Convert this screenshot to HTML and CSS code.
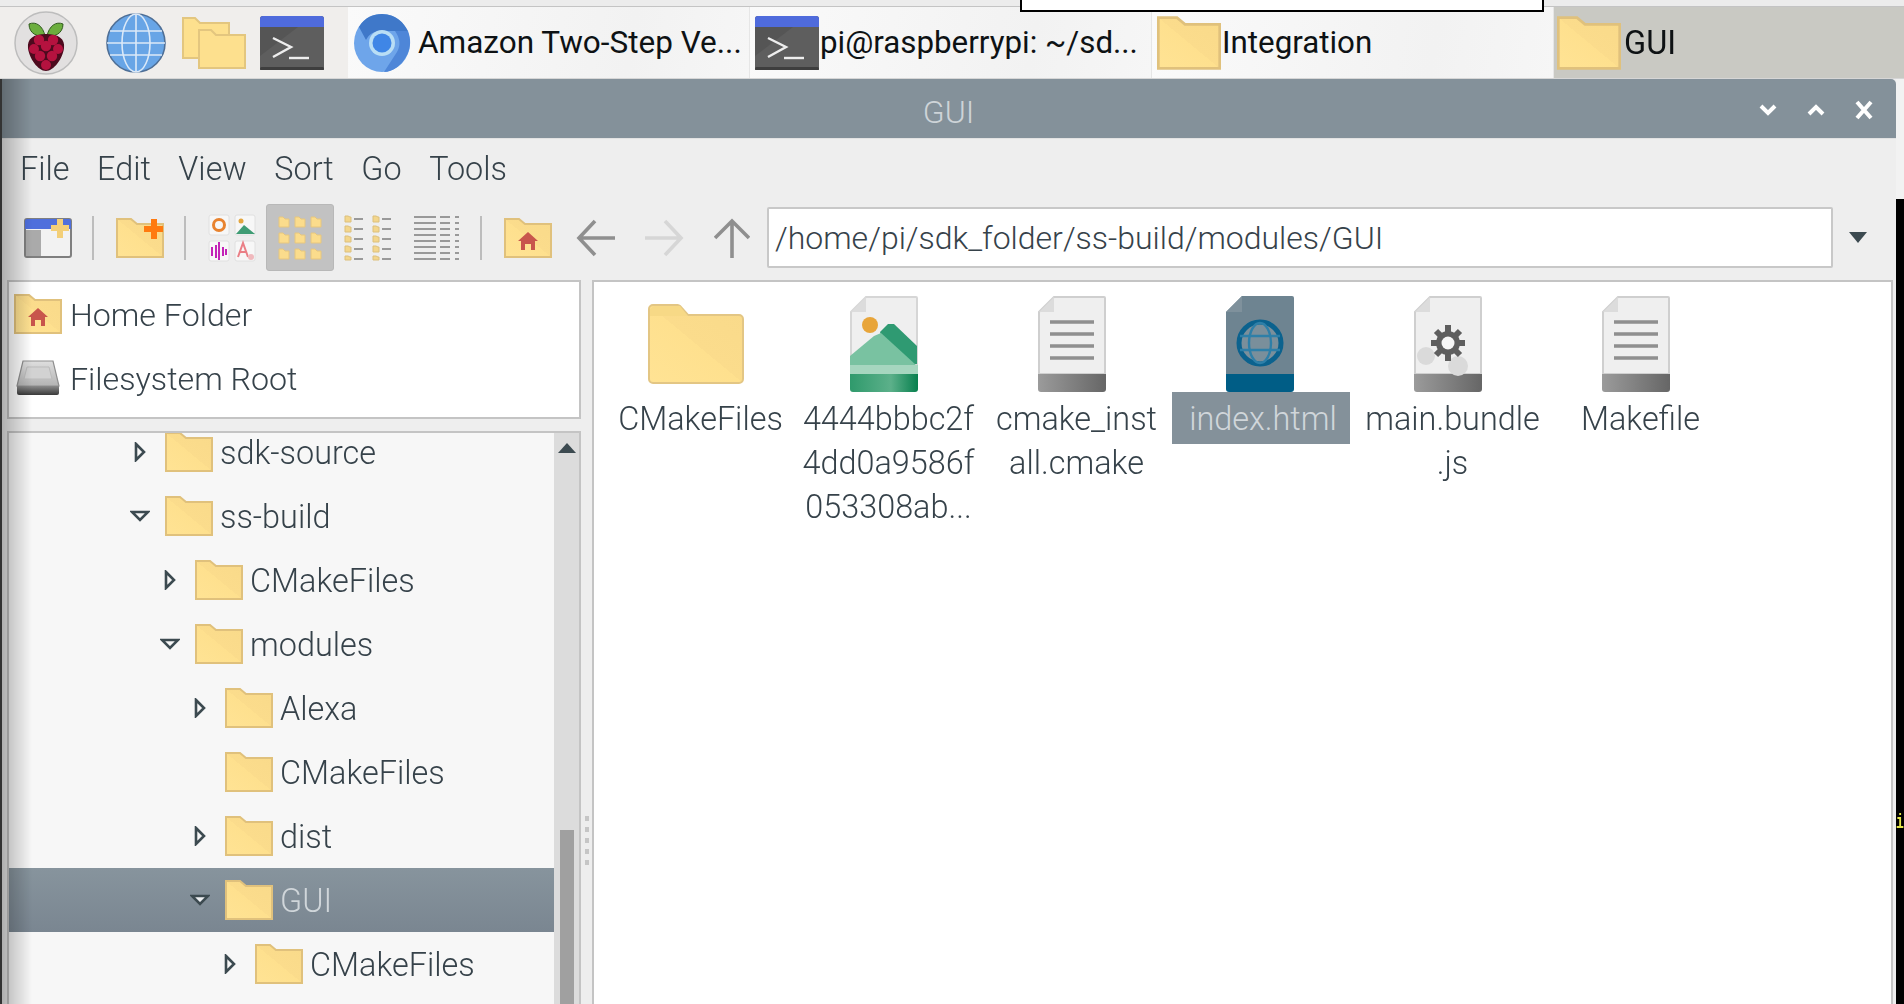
FILE: index.html
```html
<!DOCTYPE html>
<html lang="en">
<head>
<meta charset="utf-8">
<title>GUI</title>
<link rel="stylesheet" href="styles.css">
</head>
<body>
<svg class="sprite" aria-hidden="true">
  <defs>
    <linearGradient id="gFolder" x1="0" y1="1" x2="1" y2="0">
      <stop offset="0" stop-color="#ffe394"/><stop offset=".5" stop-color="#fee08e"/><stop offset=".5" stop-color="#fbdc8c"/><stop offset="1" stop-color="#f9da8a"/>
    </linearGradient>
    <linearGradient id="gBand" x1="0" y1="0" x2="1" y2="0">
      <stop offset="0" stop-color="#9b9b9b"/><stop offset="1" stop-color="#666"/>
    </linearGradient>
    <linearGradient id="gGreen" x1="0" y1="0" x2="1" y2="0">
      <stop offset="0" stop-color="#2f9a6c"/><stop offset=".6" stop-color="#5cb08a"/><stop offset="1" stop-color="#07804e"/>
    </linearGradient>
    <linearGradient id="gDisk" x1="0" y1="0" x2="0" y2="1">
      <stop offset="0" stop-color="#dedede"/><stop offset="1" stop-color="#b4b4b4"/>
    </linearGradient>
    <linearGradient id="gDiskBand" x1="0" y1="0" x2="0" y2="1">
      <stop offset="0" stop-color="#8a8a8a"/><stop offset="1" stop-color="#3a3a3a"/>
    </linearGradient>
    <symbol id="folder" viewBox="0 0 48 40">
      <path d="M1 1h14l6 5h26v33H1z" fill="url(#gFolder)" stroke="#e0c17c" stroke-width="2"/>
    </symbol>
    <symbol id="folder-lg" viewBox="0 0 96 80">
      <path d="M1 5a4 4 0 0 1 4-4h24a4 4 0 0 1 3 1l8 9h51a4 4 0 0 1 4 4v60a4 4 0 0 1-4 4H5a4 4 0 0 1-4-4z" fill="url(#gFolder)" stroke="#e3c684" stroke-width="2"/>
      <path d="M2 12h38l-8-10H6l-4 3z" fill="#f7d986"/>
    </symbol>
    <symbol id="terminal" viewBox="0 0 64 54">
      <rect x="0" y="0" width="64" height="54" rx="3" fill="#555"/>
      <path d="M0 54V40L38 11h26v43z" fill="#5e5e5e"/>
      <rect x="0" y="51" width="64" height="3" rx="1.5" fill="#3e3e3e"/>
      <path d="M0 11V3a3 3 0 0 1 3-3h58a3 3 0 0 1 3 3v8z" fill="#4f6bdc"/>
      <path d="M13 22l18 9-18 10" fill="none" stroke="#eee" stroke-width="2.4"/>
      <path d="M29 42h20" stroke="#eee" stroke-width="2.4"/>
    </symbol>
    <symbol id="doc" viewBox="0 0 68 96">
      <path d="M16 1h50a1 1 0 0 1 1 1v76H1V16z" fill="#efefef" stroke="#cfcfcf" stroke-width="2"/>
      <path d="M16 1v15H1z" fill="#dcdcdc"/>
      <path d="M0 78h68v15a3 3 0 0 1-3 3H3a3 3 0 0 1-3-3z" fill="url(#gBand)"/>
    </symbol>
    <symbol id="doc-text" viewBox="0 0 68 96">
      <use href="#doc" width="68" height="96"/>
      <path d="M12 26h44M12 38h44M12 50h44M12 62h44" stroke="#8f8f8f" stroke-width="3.4"/>
    </symbol>
    <symbol id="doc-image" viewBox="0 0 68 96">
      <path d="M16 1h50a1 1 0 0 1 1 1v76H1V16z" fill="#efefef" stroke="#d6d6d6" stroke-width="2"/>
      <path d="M16 1v15H1z" fill="#dcdcdc"/>
      <circle cx="20" cy="29" r="8" fill="#e8a53a"/>
      <path d="M30 36l8-8 6 0 23 22v18H40z" fill="#2f9a72"/>
      <path d="M0 60l24-20 7-3 35 32v9H0z" fill="#79c2a1"/>
      <path d="M0 69h68v9H0z" fill="#a6d6bf"/>
      <path d="M0 78h68v15a3 3 0 0 1-3 3H3a3 3 0 0 1-3-3z" fill="url(#gGreen)"/>
    </symbol>
    <symbol id="doc-html" viewBox="0 0 68 96">
      <path d="M16 0h50a2 2 0 0 1 2 2v76H0V16z" fill="#6e8491"/>
      <path d="M16 0v16H0z" fill="#7f919c"/>
      <circle cx="34" cy="47" r="21" fill="#7a8f9b" stroke="#0b628e" stroke-width="5"/>
      <ellipse cx="34" cy="47" rx="11" ry="20" fill="none" stroke="#2e7fa8" stroke-width="2.4"/>
      <path d="M14 40h40M14 54h40" stroke="#2e7fa8" stroke-width="2.4"/>
      <path d="M0 78h68v15a3 3 0 0 1-3 3H3a3 3 0 0 1-3-3z" fill="#005d86"/>
    </symbol>
    <symbol id="doc-gear" viewBox="0 0 68 96">
      <use href="#doc" width="68" height="96"/>
      <g fill="#dadada"><circle cx="12" cy="60" r="9"/><circle cx="44" cy="70" r="10"/></g>
      <path d="M34 29v36M17 47h34M22 35l24 24M46 35L22 59" stroke="#5e5e5e" stroke-width="6"/>
      <circle cx="34" cy="47" r="12" fill="#5e5e5e"/>
      <circle cx="34" cy="47" r="6.5" fill="#f6f6f6"/>
    </symbol>
    <symbol id="home-folder" viewBox="0 0 48 40">
      <path d="M1 1h14l6 5h26v33H1z" fill="url(#gFolder)" stroke="#e0c17c" stroke-width="2"/>
      <path d="M24 14l10 9h-3v9h-4v-6h-6v6h-4v-9h-3z" fill="#c8554c"/>
    </symbol>
    <symbol id="disk" viewBox="0 0 46 36">
      <path d="M8 1h30l6 25H2z" fill="url(#gDisk)" stroke="#8f8f8f" stroke-width="1.2"/>
      <path d="M12 7h22l3 12H9z" fill="#d2d2d2" stroke="#bbb"/>
      <path d="M2 26h42v7a2 2 0 0 1-2 2H4a2 2 0 0 1-2-2z" fill="url(#gDiskBand)"/>
    </symbol>
    <symbol id="tri-right" viewBox="0 0 12 20">
      <path d="M2 2l8 8-8 8z" fill="currentColor" stroke="#3c4a50" stroke-width="2.6"/>
    </symbol>
    <symbol id="tri-down" viewBox="0 0 20 12">
      <path d="M2 2h16l-8 8z" fill="currentColor" stroke="#3c4a50" stroke-width="2.6"/>
    </symbol>
  </defs>
</svg>

<div class="screen">
  <div class="topstrip"></div>
  <div class="notch"></div>

  <header class="taskbar">
    <div class="launchers">
      <svg class="ico-menu" viewBox="0 0 64 66">
        <circle cx="32" cy="33" r="31" fill="#e2e0e0" stroke="#bdbdbd" stroke-width="1.5"/>
        <path d="M31 26C24 27 15 24 15 14c7-3 14 2 16 12zM33 26c7 1 16-2 16-12-7-3-14 2-16 12z" fill="#6cae3e" stroke="#2f5a1c"/>
        <path d="M32 24c13 0 19 5 18 14-1 10-10 23-18 23S15 48 14 38c-1-9 5-14 18-14z" fill="#4d0a1e"/>
        <g fill="#b5123f">
          <circle cx="25" cy="30" r="5.2"/><circle cx="39" cy="30" r="5.2"/><circle cx="32" cy="36" r="5.2"/>
          <circle cx="20" cy="39" r="5"/><circle cx="44" cy="39" r="5"/><circle cx="26" cy="46" r="5.2"/>
          <circle cx="38" cy="46" r="5.2"/><circle cx="32" cy="55" r="5"/>
        </g>
      </svg>
      <svg class="ico-globe" viewBox="0 0 60 60">
        <circle cx="30" cy="30" r="29" fill="#68a5e6" stroke="#4f6f96" stroke-width="1.6"/>
        <ellipse cx="30" cy="30" rx="14" ry="29" fill="none" stroke="#dbe9f8" stroke-width="1.6"/>
        <path d="M30 1v58M4 18h52M1 30h58M4 42h52" stroke="#dbe9f8" stroke-width="1.6"/>
      </svg>
      <svg class="ico-folders" viewBox="0 0 64 52">
        <path d="M1 1h12l5 5h29v35H1z" fill="#fde08e" stroke="#e3c67f" stroke-width="2"/>
        <path d="M17 13h12l5 5h29v33H17z" fill="#fde08e" stroke="#e3c67f" stroke-width="2"/>
      </svg>
      <svg class="ico-term"><use href="#terminal"/></svg>
    </div>
    <div class="task">
      <svg class="ico-chrome" viewBox="0 0 58 60">
        <ellipse cx="29" cy="30" rx="28" ry="29" fill="#6ea5ea"/>
        <path d="M6 14C12 4 20 1 29 1c14 0 22 9 26 17H29c-8 0-13 3-16 9z" fill="#3f78c9"/>
        <path d="M55 18c3 8 3 16-1 24-5 10-14 17-23 17l13-20c4-7 3-14-2-21z" fill="#4e86d8"/>
        <circle cx="29" cy="30" r="13" fill="#b9def5"/>
        <circle cx="29" cy="30" r="9.5" fill="#3f86e6"/>
      </svg>
      <span class="task-label">Amazon Two-Step Ve...</span>
    </div>
    <div class="task">
      <svg class="ico-term"><use href="#terminal"/></svg>
      <span class="task-label">pi@raspberrypi: ~/sd...</span>
    </div>
    <div class="task">
      <svg class="ico-task-folder"><use href="#folder"/></svg>
      <span class="task-label">Integration</span>
    </div>
    <div class="task task-active">
      <svg class="ico-task-folder"><use href="#folder"/></svg>
      <span class="task-label">GUI</span>
    </div>
  </header>

  <div class="desktop">
    <main class="window">
      <div class="edge-shadow"></div>
      <div class="titlebar">
        <span class="title">GUI</span>
        <div class="controls">
          <svg viewBox="0 0 20 20"><path d="M3 6l7 7 7-7" fill="none" stroke="#fff" stroke-width="4"/></svg>
          <svg viewBox="0 0 20 20"><path d="M3 14l7-7 7 7" fill="none" stroke="#fff" stroke-width="4"/></svg>
          <svg viewBox="0 0 20 20"><path d="M3 2l14 16M17 2L3 18" fill="none" stroke="#fff" stroke-width="4"/></svg>
        </div>
      </div>

      <nav class="menubar">
        <span>File</span><span>Edit</span><span>View</span><span>Sort</span><span>Go</span><span>Tools</span>
      </nav>

      <div class="toolbar">
        <svg class="tool" viewBox="0 0 48 40">
          <rect x="1" y="1" width="46" height="38" rx="2" fill="#f2f2f2" stroke="#7f7f7f" stroke-width="2"/>
          <rect x="2" y="12" width="15" height="26" fill="#aaa"/>
          <path d="M1 11V3a2 2 0 0 1 2-2h42a2 2 0 0 1 2 2v8z" fill="#4f6fdc"/>
          <path d="M39 1v6h6v6h-6v7h-6v-7h-6V7h6V1z" fill="#f3cf78"/>
        </svg>
        <i class="sep"></i>
        <svg class="tool after-sep" viewBox="0 0 48 40">
          <use href="#folder" width="48" height="40"/>
          <path d="M35 1h6v7h6v6h-6v7h-6v-7h-7V8h7z" fill="#ff7a0f"/>
        </svg>
        <i class="sep"></i>
        <svg class="tool tool-tall after-sep" viewBox="0 0 48 48">
          <rect x="1" y="1" width="20" height="20" rx="2" fill="#f7f7f7" stroke="#e0e0e0"/>
          <circle cx="11" cy="11" r="5.5" fill="none" stroke="#e8832f" stroke-width="3"/>
          <rect x="27" y="1" width="20" height="20" rx="2" fill="#f7f7f7" stroke="#e0e0e0"/>
          <circle cx="33" cy="7" r="2.5" fill="#e3a63f"/>
          <path d="M28 20l8-9 11 9z" fill="#3f9c74"/>
          <rect x="1" y="27" width="20" height="20" rx="2" fill="#f7f7f7" stroke="#e0e0e0"/>
          <path d="M4 33v9M8 31v13M11 28v18M15 33v9M18 35v6" stroke="#c323b7" stroke-width="2"/>
          <rect x="27" y="27" width="20" height="20" rx="2" fill="#f7f7f7" stroke="#e0e0e0"/>
          <path d="M30 43l5-14 5 14M32 38h6" fill="none" stroke="#ea7f86" stroke-width="2"/>
          <circle cx="43" cy="43" r="3" fill="#f0b9bd"/>
        </svg>
        <div class="tool-active">
          <svg viewBox="0 0 44 44">
            <g fill="#fbdc8c" stroke="#e6c67f">
              <path d="M1 1h4l2 2h4v8H1zM17 1h4l2 2h4v8H17zM33 1h4l2 2h4v8H33z"/>
              <path d="M1 17h4l2 2h4v8H1zM17 17h4l2 2h4v8H17zM33 17h4l2 2h4v8H33z"/>
              <path d="M1 33h4l2 2h4v8H1zM17 33h4l2 2h4v8H17zM33 33h4l2 2h4v8H33z"/>
            </g>
          </svg>
        </div>
        <svg class="tool tool-list" viewBox="0 0 48 46">
          <g fill="#f3d68c" stroke="#dcc07c">
            <path d="M1 1h3l2 1h1v5H1zM1 11h3l2 1h1v5H1zM1 21h3l2 1h1v5H1zM1 31h3l2 1h1v5H1zM1 41h3l2 1h1v3H1z"/>
            <path d="M29 1h3l2 1h1v5h-6zM29 11h3l2 1h1v5h-6zM29 21h3l2 1h1v5h-6zM29 31h3l2 1h1v5h-6zM29 41h3l2 1h1v3h-6z"/>
          </g>
          <path d="M10 4h9M10 14h9M10 24h9M10 34h9M10 44h9M38 4h9M38 14h9M38 24h9M38 34h9M38 44h9" stroke="#999" stroke-width="2"/>
        </svg>
        <svg class="tool tool-compact" viewBox="0 0 46 46">
          <path d="M0 2h22M0 8h22M0 14h22M0 20h22M0 26h22M0 32h22M0 38h22M0 44h22M26 2h10M26 8h10M26 14h10M26 20h10M26 26h10M26 32h10M26 38h10M26 44h10M41 2h4M41 8h4M41 14h4M41 20h4M41 26h4M41 32h4M41 38h4M41 44h4" stroke="#999" stroke-width="2"/>
        </svg>
        <i class="sep"></i>
        <svg class="tool after-sep"><use href="#home-folder"/></svg>
        <svg class="nav nav-back" viewBox="0 0 40 40"><path d="M39 20H3M19 3L3 20l16 17" fill="none" stroke="#8f8f8f" stroke-width="3.6"/></svg>
        <svg class="nav nav-fwd" viewBox="0 0 40 40"><path d="M1 20h36M21 3l16 17-16 17" fill="none" stroke="#d6d6d6" stroke-width="3.6"/></svg>
        <svg class="nav nav-up" viewBox="0 0 36 40"><path d="M18 40V3M1 20L18 3l17 17" fill="none" stroke="#8f8f8f" stroke-width="3.6"/></svg>
        <div class="pathbar">/home/pi/sdk_folder/ss-build/modules/GUI</div>
        <svg class="path-drop" viewBox="0 0 18 11"><path d="M0 0h18L9 11z" fill="#3c4a50"/></svg>
      </div>

      <div class="panes">
        <aside class="sidebar">
          <div class="places">
            <div class="place"><svg class="place-home"><use href="#home-folder"/></svg><span>Home Folder</span></div>
            <div class="place"><svg class="place-disk"><use href="#disk"/></svg><span>Filesystem Root</span></div>
          </div>
          <div class="tree">
            <div class="tree-rows">
              <div class="row lvl0"><svg class="exp-r"><use href="#tri-right"/></svg><svg class="tf"><use href="#folder"/></svg><span>sdk-source</span></div>
              <div class="row lvl0"><svg class="exp-d"><use href="#tri-down"/></svg><svg class="tf"><use href="#folder"/></svg><span>ss-build</span></div>
              <div class="row lvl1"><svg class="exp-r"><use href="#tri-right"/></svg><svg class="tf"><use href="#folder"/></svg><span>CMakeFiles</span></div>
              <div class="row lvl1"><svg class="exp-d"><use href="#tri-down"/></svg><svg class="tf"><use href="#folder"/></svg><span>modules</span></div>
              <div class="row lvl2"><svg class="exp-r"><use href="#tri-right"/></svg><svg class="tf"><use href="#folder"/></svg><span>Alexa</span></div>
              <div class="row lvl2"><i class="exp-none"></i><svg class="tf"><use href="#folder"/></svg><span>CMakeFiles</span></div>
              <div class="row lvl2"><svg class="exp-r"><use href="#tri-right"/></svg><svg class="tf"><use href="#folder"/></svg><span>dist</span></div>
              <div class="row lvl2 row-sel"><svg class="exp-d"><use href="#tri-down"/></svg><svg class="tf"><use href="#folder"/></svg><span>GUI</span></div>
              <div class="row lvl3"><svg class="exp-r"><use href="#tri-right"/></svg><svg class="tf"><use href="#folder"/></svg><span>CMakeFiles</span></div>
            </div>
            <div class="vscroll">
              <svg class="vs-up" viewBox="0 0 18 10"><path d="M0 10L9 0l9 10z" fill="#3c4a50"/></svg>
              <div class="vs-thumb"></div>
            </div>
          </div>
        </aside>
        <div class="grip"><i></i><i></i><i></i><i></i><i></i></div>
        <section class="files">
          <div class="file"><svg class="fi-folder"><use href="#folder-lg"/></svg><span class="fname">CMakeFiles</span></div>
          <div class="file"><svg class="fi-doc"><use href="#doc-image"/></svg><span class="fname">4444bbbc2f 4dd0a9586f 053308ab...</span></div>
          <div class="file"><svg class="fi-doc"><use href="#doc-text"/></svg><span class="fname">cmake_inst all.cmake</span></div>
          <div class="file"><svg class="fi-doc"><use href="#doc-html"/></svg><span class="fname fname-sel">index.html</span></div>
          <div class="file"><svg class="fi-doc"><use href="#doc-gear"/></svg><span class="fname">main.bundle .js</span></div>
          <div class="file"><svg class="fi-doc"><use href="#doc-text"/></svg><span class="fname">Makefile</span></div>
        </section>
      </div>
    </main>
    <aside class="backdrop">
      <div class="backdrop-top"></div>
      <div class="backdrop-term"><span class="term-glyph">i</span></div>
    </aside>
  </div>
</div>
</body>
</html>
```

FILE: styles.css
```css
* { box-sizing: border-box; }
html, body { margin: 0; padding: 0; }
body {
  width: 1904px;
  height: 1004px;
  overflow: hidden;
  background: #ececec;
  font-family: Roboto, "Liberation Sans", sans-serif;
  font-size: 32.4px;
  font-weight: 300;
  color: #36424a;
}
.sprite { position: absolute; width: 0; height: 0; overflow: hidden; }
svg { display: block; flex: none; }

.screen { position: relative; width: 1904px; height: 1004px; display: flex; flex-direction: column; filter: blur(.45px); }
.topstrip { height: 7px; background: #ececec; border-bottom: 1px solid #c4c4c4; flex: none; }
.notch {
  position: absolute; left: 1020px; top: 0; width: 524px; height: 12px;
  background: #fff; border: 2px solid #000; border-top: 0;
}

/* Taskbar */
.taskbar { height: 72px; flex: none; display: flex; background: #f6f6f6; border-bottom: 1px solid #d6d6d6; }
.launchers {
  width: 348px; flex: none; display: flex; align-items: center; background: #f0eeec;
  padding-left: 14px;
}
.ico-menu { width: 64px; height: 66px; }
.ico-globe { width: 60px; height: 60px; margin-left: 28px; }
.ico-folders { width: 64px; height: 52px; margin-left: 16px; }
.launchers .ico-term { margin-left: 14px; }
.ico-term { width: 64px; height: 54px; }
.task {
  width: 402px; flex: none; display: flex; align-items: center; padding-left: 5px;
  border-right: 1px solid #e6e6e6; color: #0e1214;
  background: linear-gradient(100deg, #fafafa, #f2f2f2 70%, #f6f6f6);
}
.task-active { flex: 1; width: auto; background: #c9c9c3; padding-left: 3px; border: 0; }
.task-label { margin-left: 1px; white-space: nowrap; font-weight: 400; font-size: 31.3px; }
.ico-task-folder { width: 64px; height: 54px; }
.ico-chrome { width: 58px; height: 60px; }
.ico-chrome + .task-label { margin-left: 7px; font-size: 31.5px; }
.task-active .task-label { margin-left: 3px; font-size: 32.5px; }

/* Window */
.desktop { flex: 1; display: flex; min-height: 0; }
.window {
  position: relative; width: 1896px; flex: none; display: flex; flex-direction: column;
  background: #eee; border-left: 2px solid #333; overflow: hidden;
}
.edge-shadow {
  position: absolute; left: 0; top: 0; bottom: 0; width: 30px; pointer-events: none; z-index: 5;
  background: linear-gradient(90deg, rgba(0,0,0,.26), rgba(0,0,0,0));
}
.titlebar {
  height: 60px; flex: none; display: flex; align-items: center; justify-content: center;
  background: #84919a; border-top-right-radius: 5px; position: relative; border-bottom: 1px solid #e2e2e2;
}
.title { color: #ced4d8; font-size: 32px; margin-left: -1px; padding-top: 6px; }
.controls { position: absolute; right: 22px; top: 0; bottom: 0; display: flex; gap: 28px; align-items: center; padding-top: 3px; }
.controls svg { width: 20px; height: 20px; }

.menubar { height: 58px; flex: none; display: flex; align-items: center; gap: 27.5px; padding: 1px 0 0 18px; }

.toolbar { height: 83px; flex: none; display: flex; align-items: center; padding: 0 0 2px 22px; }
.tool { width: 48px; height: 40px; }
.tool-tall { height: 48px; }
.sep { width: 2px; height: 44px; margin-left: 20px; background: #bdbdbd; }
.after-sep { margin-left: 22px; }
.tool-active {
  width: 68px; height: 67px; margin-left: 10px; background: #c2c2c2; border: 1px solid #b8b8b8; border-radius: 3px;
  display: flex; align-items: center; justify-content: center;
}
.tool-active svg { width: 44px; height: 44px; }
.tool-list { height: 46px; margin-left: 10px; }
.tool-compact { width: 46px; height: 46px; margin-left: 22px; }
.nav { height: 40px; }
.nav-back { width: 40px; margin-left: 24px; }
.nav-fwd { width: 40px; margin-left: 28px; }
.nav-up { width: 36px; margin-left: 30px; }
.pathbar {
  width: 1066px; height: 61px; margin-left: 17px; padding-left: 6px; background: #fff;
  border: 2px solid #c8c8c8; border-radius: 2px; display: flex; align-items: center;
  white-space: nowrap; font-size: 32px;
}
.path-drop { width: 18px; height: 11px; margin-left: 16px; }

/* Panes */
.panes { flex: 1; min-height: 0; display: flex; padding-left: 5px; }
.sidebar { width: 574px; flex: none; display: flex; flex-direction: column; gap: 12px; }
.places { height: 139px; flex: none; background: #fff; border: 2px solid #c4c4c4; }
.place { height: 64px; display: flex; align-items: center; }
.place span { margin-left: 8px; padding-top: 2px; font-size: 32.2px; }
.place-home { width: 48px; height: 40px; margin-left: 5px; }
.place-disk { width: 46px; height: 36px; margin-left: 6px; margin-right: 1px; }
.tree {
  flex: 1; min-height: 0; display: flex; background: #f7f7f7;
  border: 2px solid #c4c4c4; border-bottom: 0; overflow: hidden;
}
.tree-rows { flex: 1; min-width: 0; margin-top: -13px; }
.row { height: 64px; display: flex; align-items: center; }
.lvl0 { padding-left: 119px; }
.lvl1 { padding-left: 149px; }
.lvl2 { padding-left: 179px; }
.lvl3 { padding-left: 209px; }
.row span { margin-left: 7px; padding-top: 2px; white-space: nowrap; }
.exp-r { width: 12px; height: 20px; margin: 0 19px 0 6px; color: transparent; }
.exp-d { width: 20px; height: 12px; margin: 0 15px 0 2px; color: transparent; }
.exp-none { width: 37px; flex: none; }
.tf { width: 48px; height: 40px; }
.row-sel { background: linear-gradient(#87949d, #7a8691); color: #d0d6da; }
.row-sel .exp-d { color: #eceff1; }
.vscroll { width: 25px; flex: none; background: #dcdcdc; display: flex; flex-direction: column; align-items: center; }
.vs-up { width: 18px; height: 10px; margin-top: 10px; }
.vs-thumb { width: 14px; margin-top: auto; height: 174px; background: #a0a0a0; }
.grip { width: 11px; flex: none; display: flex; flex-direction: column; gap: 6px; align-items: center; padding-top: 536px; }
.grip i { width: 4px; height: 5px; background: #c6c6c6; }

.files {
  flex: 1; min-width: 0; background: #fff; display: flex; align-items: flex-start;
  border-left: 2px solid #c4c4c4; border-top: 2px solid #c4c4c4; border-right: 2px solid #c4c4c4;
  padding: 14px 0 0 12px; margin-right: 3px;
}
.file { width: 188px; height: 170px; flex: none; display: flex; flex-direction: column; align-items: center; }
.fi-folder { width: 96px; height: 80px; margin-top: 8px; margin-bottom: 8px; margin-right: 8px; }
.fi-doc { width: 68px; height: 96px; margin-right: 8px; }
.fname { width: 178px; text-align: center; line-height: 44px; padding: 5px 0 0 1px; word-spacing: 100vw; }
.fname-sel { background: #84919a; color: #d0d6da; height: 52px; margin-right: 6px; padding-left: 4px; }

.backdrop { flex: 1; display: flex; flex-direction: column; }
.backdrop-top { height: 120px; background: #f2f2f2; flex: none; }
.backdrop-term { flex: 1; background: #000; font-family: "Liberation Mono", monospace; font-size: 13px; color: #e6e64a; padding-top: 616px; overflow: hidden; }
.term-glyph { display: block; font-weight: 700; transform: scaleY(1.5); }
```
